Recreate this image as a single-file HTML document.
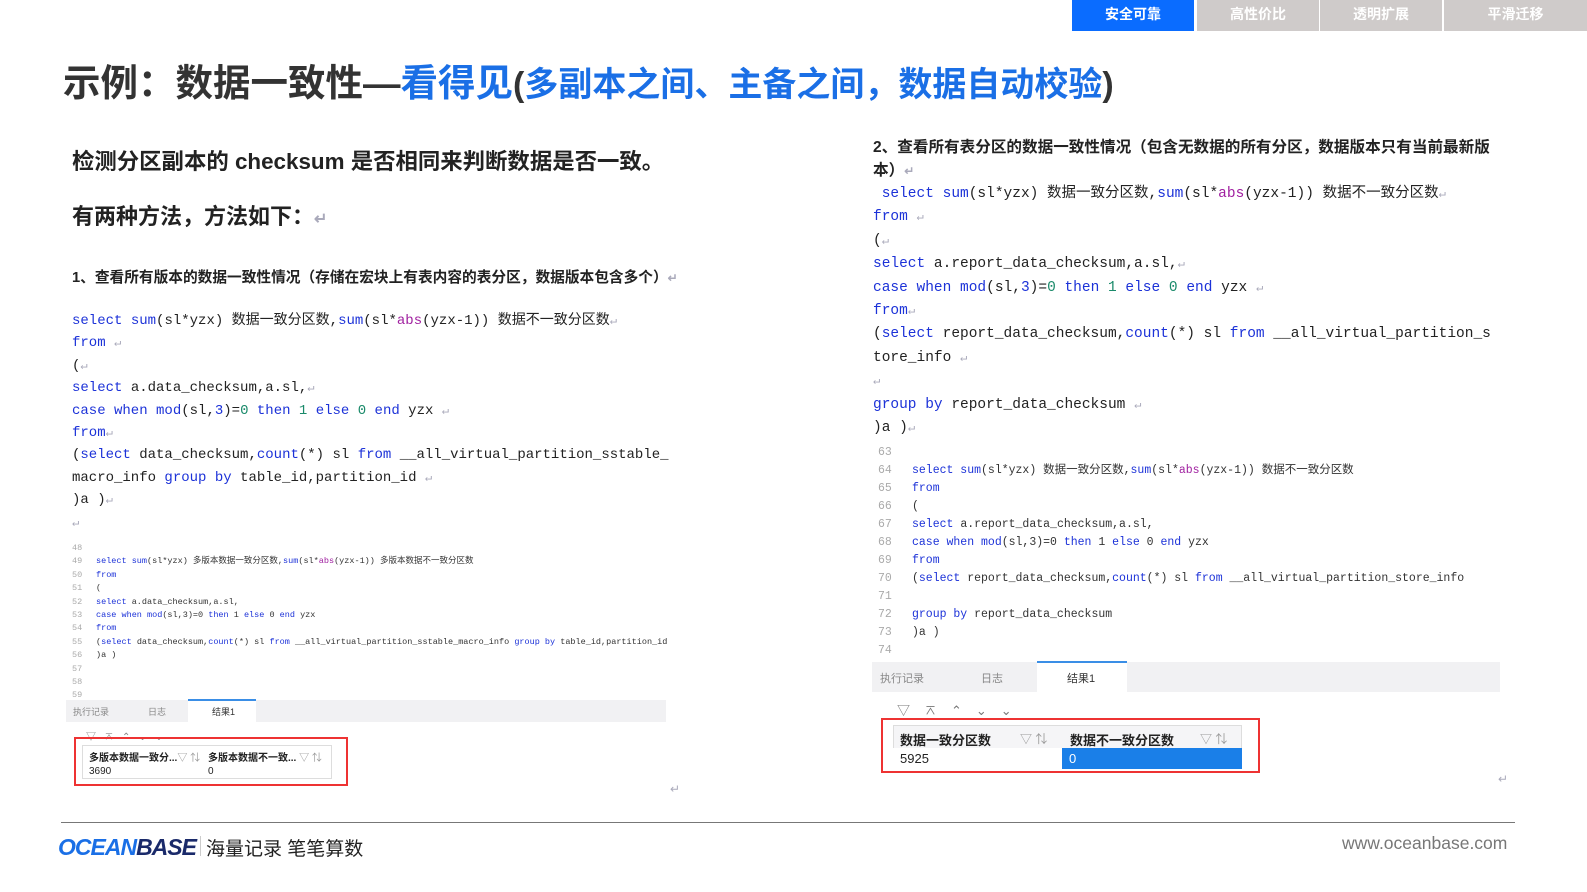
<!DOCTYPE html>
<html><head><meta charset="utf-8"><style>
*{margin:0;padding:0;box-sizing:border-box}
body{width:1587px;height:892px;background:#fff;position:relative;overflow:hidden;font-family:"Liberation Sans","Noto Sans CJK SC",sans-serif;color:#222}
.a{position:absolute;white-space:nowrap}
.tab{position:absolute;top:0;height:31px;width:122px;background:#cfcbca;color:#fff;font-weight:bold;font-size:14px;text-align:center;line-height:29px}
.m{font-family:"Liberation Mono","Noto Sans CJK SC",monospace;font-size:15px;color:#222}
.k{color:#1c32d8}.g{color:#1a8a6a}.p{color:#a020a0}
.r{color:#aab;font-size:12px}
.s{font-family:"Liberation Mono","Noto Sans CJK SC",monospace;font-size:11.5px;color:#333}
.n{color:#aaa;display:inline-block;width:34px}
.t{font-family:"Liberation Mono","Noto Sans CJK SC",monospace;font-size:8.5px;color:#333}
.tn{color:#aaa;display:inline-block;width:24px}
</style></head><body>
<div class="tab" style="left:1072px;background:#0a6cff">安全可靠</div>
<div class="tab" style="left:1197px">高性价比</div>
<div class="tab" style="left:1320px">透明扩展</div>
<div class="tab" style="left:1444px;width:143px">平滑迁移</div>

<div class="a" style="left:63px;top:52px;font-size:37.5px;font-weight:bold;color:#333">示例：数据一致性—<span style="color:#1a6fe6">看得见</span><span style="font-size:34px">(<span style="color:#1a6fe6">多副本之间、主备之间，数据自动校验</span>)</span></div>

<div class="a" style="left:72px;top:144px;font-size:22.4px;font-weight:bold;color:#222">检测分区副本的 checksum 是否相同来判断数据是否一致。</div>
<div class="a" style="left:72px;top:199px;font-size:22px;font-weight:bold;color:#222">有两种方法，方法如下：<span class="r" style="font-size:16px">↵</span></div>
<div class="a" style="left:72px;top:266px;font-size:14.7px;font-weight:bold">1、查看所有版本的数据一致性情况（存储在宏块上有表内容的表分区，数据版本包含多个）<span class="r">↵</span></div>

<div class="a m" style="left:72px;top:310px;line-height:22.4px;font-size:14px">
<span class="k">select</span> <span class="k">sum</span>(sl*yzx) 数据一致分区数,<span class="k">sum</span>(sl*<span class="p">abs</span>(yzx-1)) 数据不一致分区数<span class="r">↵</span><br>
<span class="k">from</span> <span class="r">↵</span><br>(<span class="r">↵</span><br>
<span class="k">select</span> a.data_checksum,a.sl,<span class="r">↵</span><br>
<span class="k">case when</span> <span class="k">mod</span>(sl,<span class="k">3</span>)=<span class="g">0</span> <span class="k">then</span> <span class="g">1</span> <span class="k">else</span> <span class="g">0</span> <span class="k">end</span> yzx <span class="r">↵</span><br>
<span class="k">from</span><span class="r">↵</span><br>
(<span class="k">select</span> data_checksum,<span class="k">count</span>(*) sl <span class="k">from</span> __all_virtual_partition_sstable_<br>
macro_info <span class="k">group by</span> table_id,partition_id <span class="r">↵</span><br>
)a )<span class="r">↵</span><br><span class="r">↵</span></div>

<div class="a t" style="left:72px;top:542px;line-height:13.4px">
<span class="tn">48</span><br>
<span class="tn">49</span><span class="k">select sum</span>(sl*yzx) 多版本数据一致分区数,<span class="k">sum</span>(sl*<span class="p">abs</span>(yzx-1)) 多版本数据不一致分区数<br>
<span class="tn">50</span><span class="k">from</span><br><span class="tn">51</span>(<br>
<span class="tn">52</span><span class="k">select</span> a.data_checksum,a.sl,<br>
<span class="tn">53</span><span class="k">case when mod</span>(sl,3)=0 <span class="k">then</span> 1 <span class="k">else</span> 0 <span class="k">end</span> yzx<br>
<span class="tn">54</span><span class="k">from</span><br>
<span class="tn">55</span>(<span class="k">select</span> data_checksum,<span class="k">count</span>(*) sl <span class="k">from</span> __all_virtual_partition_sstable_macro_info <span class="k">group by</span> table_id,partition_id<br>
<span class="tn">56</span>)a )<br><span class="tn">57</span><br><span class="tn">58</span><br><span class="tn">59</span></div>
<div class="a" style="left:66px;top:700px;width:600px;height:22px;background:#f1f1f3"></div>
<div class="a" style="left:188px;top:699px;width:68px;height:23px;background:#fff;border-top:2px solid #3a8ee6"></div>
<div class="a" style="left:73px;top:705px;font-size:9px;color:#888">执行记录</div>
<div class="a" style="left:148px;top:705px;font-size:9px;color:#888">日志</div>
<div class="a" style="left:212px;top:705px;font-size:9px;color:#333">结果1</div>
<div class="a" style="left:86px;top:728px;font-size:10px;color:#888;letter-spacing:8px">▽⌅⌃⌄⌄</div>
<div class="a" style="left:74px;top:737px;width:274px;height:49px;border:2px solid #e33"></div>
<div class="a" style="left:82px;top:745px;width:250px;height:34px;border:1px solid #ddd"></div>
<div class="a" style="left:89px;top:749px;font-size:10px;font-weight:bold">多版本数据一致分...<span style="color:#999;font-weight:normal">▽ ⇅</span></div>
<div class="a" style="left:208px;top:749px;font-size:10px;font-weight:bold">多版本数据不一致... <span style="color:#999;font-weight:normal">▽ ⇅</span></div>
<div class="a" style="left:89px;top:766px;font-size:10px">3690</div>
<div class="a" style="left:208px;top:766px;font-size:10px">0</div>
<div class="a" style="left:670px;top:780px" ><span class="r">↵</span></div>

<div class="a" style="left:873px;top:136px;font-size:15.6px;font-weight:bold;line-height:23px">2、查看所有表分区的数据一致性情况（包含无数据的所有分区，数据版本只有当前最新版<br>本）<span class="r">↵</span></div>
<div class="a m" style="left:873px;top:183px;line-height:23.4px;font-size:14.5px">
&nbsp;<span class="k">select</span> <span class="k">sum</span>(sl*yzx) 数据一致分区数,<span class="k">sum</span>(sl*<span class="p">abs</span>(yzx-1)) 数据不一致分区数<span class="r">↵</span><br>
<span class="k">from</span> <span class="r">↵</span><br>(<span class="r">↵</span><br>
<span class="k">select</span> a.report_data_checksum,a.sl,<span class="r">↵</span><br>
<span class="k">case when</span> <span class="k">mod</span>(sl,<span class="k">3</span>)=<span class="g">0</span> <span class="k">then</span> <span class="g">1</span> <span class="k">else</span> <span class="g">0</span> <span class="k">end</span> yzx <span class="r">↵</span><br>
<span class="k">from</span><span class="r">↵</span><br>
(<span class="k">select</span> report_data_checksum,<span class="k">count</span>(*) sl <span class="k">from</span> __all_virtual_partition_s<br>
tore_info <span class="r">↵</span><br><span class="r">↵</span><br>
<span class="k">group by</span> report_data_checksum <span class="r">↵</span><br>
)a )<span class="r">↵</span></div>

<div class="a s" style="left:878px;top:444px;line-height:18px">
<span class="n">63</span><br>
<span class="n">64</span><span class="k">select sum</span>(sl*yzx) 数据一致分区数,<span class="k">sum</span>(sl*<span class="p">abs</span>(yzx-1)) 数据不一致分区数<br>
<span class="n">65</span><span class="k">from</span><br><span class="n">66</span>(<br>
<span class="n">67</span><span class="k">select</span> a.report_data_checksum,a.sl,<br>
<span class="n">68</span><span class="k">case when mod</span>(sl,3)=0 <span class="k">then</span> 1 <span class="k">else</span> 0 <span class="k">end</span> yzx<br>
<span class="n">69</span><span class="k">from</span><br>
<span class="n">70</span>(<span class="k">select</span> report_data_checksum,<span class="k">count</span>(*) sl <span class="k">from</span> __all_virtual_partition_store_info<br>
<span class="n">71</span><br>
<span class="n">72</span><span class="k">group by</span> report_data_checksum<br>
<span class="n">73</span>)a )<br><span class="n">74</span></div>
<div class="a" style="left:872px;top:662px;width:628px;height:30px;background:#f1f1f3"></div>
<div class="a" style="left:1037px;top:661px;width:90px;height:31px;background:#fff;border-top:2px solid #3a8ee6"></div>
<div class="a" style="left:880px;top:670px;font-size:11px;color:#888">执行记录</div>
<div class="a" style="left:981px;top:670px;font-size:11px;color:#888">日志</div>
<div class="a" style="left:1067px;top:670px;font-size:11px;color:#333">结果1</div>
<div class="a" style="left:897px;top:700px;font-size:13px;color:#777;letter-spacing:14px">▽⌅⌃⌄⌄</div>
<div class="a" style="left:881px;top:718px;width:379px;height:55px;border:2px solid #e33"></div>
<div class="a" style="left:893px;top:725px;width:349px;height:44px;border:1px solid #ddd;background:#f5f5f7"></div>
<div class="a" style="left:893px;top:748px;width:169px;height:21px;background:#fff"></div>
<div class="a" style="left:1062px;top:748px;width:180px;height:21px;background:#1a7fe8"></div>
<div class="a" style="left:900px;top:730px;font-size:13px;font-weight:bold">数据一致分区数</div>
<div class="a" style="left:1020px;top:730px;font-size:12px;color:#999">▽ ⇅</div>
<div class="a" style="left:1070px;top:730px;font-size:13px;font-weight:bold">数据不一致分区数</div>
<div class="a" style="left:1200px;top:730px;font-size:12px;color:#999">▽ ⇅</div>
<div class="a" style="left:900px;top:751px;font-size:13px">5925</div>
<div class="a" style="left:1069px;top:751px;font-size:13px;color:#fff">0</div>
<div class="a" style="left:1498px;top:770px"><span class="r">↵</span></div>

<div class="a" style="left:61px;top:822px;width:1454px;height:1px;background:#777"></div>
<div class="a" style="left:58px;top:834px;font-size:23px;font-weight:bold;font-style:italic;letter-spacing:-1px;color:#1a6fe6">OCEAN<span style="color:#1a2a6a">BASE</span></div>
<div class="a" style="left:200px;top:836px;width:1px;height:20px;background:#ccc"></div>
<div class="a" style="left:206px;top:834px;font-size:19px;color:#222">海量记录 笔笔算数</div>
<div class="a" style="left:1342px;top:833px;font-size:17.5px;color:#777">www.oceanbase.com</div>
</body></html>
